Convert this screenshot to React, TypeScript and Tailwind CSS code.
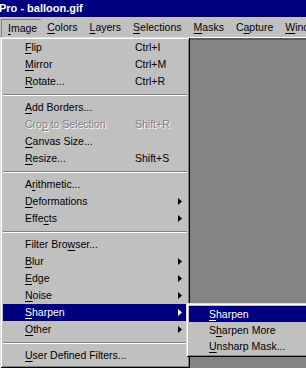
import React from "react";

type Entry =
  | { sep: true }
  | {
      sep?: false;
      a: string;
      k: string;
      b: string;
      sc?: string;
      arrow?: boolean;
      dis?: boolean;
      hl?: boolean;
    };

const items: Entry[] = [
  { a: "", k: "F", b: "lip", sc: "Ctrl+I" },
  { a: "", k: "M", b: "irror", sc: "Ctrl+M" },
  { a: "", k: "R", b: "otate...", sc: "Ctrl+R" },
  { sep: true },
  { a: "", k: "A", b: "dd Borders..." },
  { a: "Cro", k: "p", b: " to Selection", sc: "Shift+R", dis: true },
  { a: "", k: "C", b: "anvas Size..." },
  { a: "", k: "R", b: "esize...", sc: "Shift+S" },
  { sep: true },
  { a: "A", k: "r", b: "ithmetic..." },
  { a: "", k: "D", b: "eformations", arrow: true },
  { a: "Effe", k: "c", b: "ts", arrow: true },
  { sep: true },
  { a: "Filter Bro", k: "w", b: "ser..." },
  { a: "", k: "B", b: "lur", arrow: true },
  { a: "", k: "E", b: "dge", arrow: true },
  { a: "", k: "N", b: "oise", arrow: true },
  { a: "", k: "S", b: "harpen", arrow: true, hl: true },
  { a: "", k: "O", b: "ther", arrow: true },
  { sep: true },
  { a: "", k: "U", b: "ser Defined Filters..." },
];

const sub = [
  { a: "", k: "S", b: "harpen", hl: true },
  { a: "S", k: "h", b: "arpen More" },
  { a: "", k: "U", b: "nsharp Mask..." },
];

const menuBar = [
  { a: "", k: "I", b: "mage", active: true },
  { a: "", k: "C", b: "olors" },
  { a: "", k: "L", b: "ayers" },
  { a: "", k: "S", b: "elections" },
  { a: "", k: "M", b: "asks" },
  { a: "C", k: "a", b: "pture" },
  { a: "", k: "W", b: "indow" },
];

function Mn({ a, k, b }: { a: string; k: string; b: string }) {
  return (
    <span className="whitespace-pre">
      {a}
      <span className="underline decoration-1 underline-offset-[2px]">{k}</span>
      {b}
    </span>
  );
}

function Arrow() {
  return (
    <svg width="4" height="7" viewBox="0 0 4 7" className="block">
      <polygon points="0,0 4,3.5 0,7" fill="currentColor" />
    </svg>
  );
}

const winBorder =
  "shadow-[inset_1px_1px_0_#dfdfdf,inset_-1px_-1px_0_#000000,inset_2px_2px_0_#ffffff,inset_-2px_-2px_0_#808080]";

export default function App() {
  return (
    <div
      className="relative w-[306px] h-[368px] overflow-hidden bg-[#c0c0c0] flex flex-col text-[10.5px] leading-none text-black"
      style={{ fontFamily: '"Liberation Sans", Arial, sans-serif' }}
    >
      {/* Title bar */}
      <div className="h-[17px] bg-[#000080] flex items-center text-white font-bold text-[11px] pl-0">
        <span className="-ml-[1px] whitespace-pre">Pro - balloon.gif</span>
      </div>
      {/* Menu bar */}
      <div className="h-[20px] flex items-center pl-[1px] whitespace-pre">
        {menuBar.map((m, i) =>
          m.active ? (
            <div
              key={i}
              className="h-[18px] flex items-center pl-[6px] pr-[4px] border-t border-l border-[#808080] border-b-white border-r-white mt-[1px]"
            >
              <Mn a={m.a} k={m.k} b={m.b} />
            </div>
          ) : (
            <div key={i} className="h-[18px] flex items-center px-[6px]">
              <Mn a={m.a} k={m.k} b={m.b} />
            </div>
          )
        )}
      </div>
      <div className="h-[1px] bg-white" />
      {/* Workspace */}
      <div className="flex-1 bg-[#848484] border-t-2 border-[#5c5c5c]" />

      {/* Dropdown menu */}
      <div
        className={`absolute left-0 top-[37px] w-[190px] h-[331px] bg-[#c0c0c0] px-[3px] pt-[2px] ${winBorder}`}
      >
        {items.map((it, i) =>
          it.sep ? (
            <div key={i} className="h-[9px] flex flex-col justify-center">
              <div className="h-[1px] bg-[#808080]" />
              <div className="h-[1px] bg-white" />
            </div>
          ) : (
            <div
              key={i}
              className={`h-[17px] flex items-center pl-[22px] pr-[5px] ${
                it.hl ? "bg-[#000080] text-white" : ""
              } ${it.dis ? "text-[#808080] [text-shadow:1px_1px_0_#ffffff]" : ""}`}
            >
              <span className="w-[110px]">
                <Mn a={it.a} k={it.k} b={it.b} />
              </span>
              <span className="flex-1">{it.sc ?? ""}</span>
              {it.arrow ? <Arrow /> : null}
            </div>
          )
        )}
      </div>

      {/* Submenu */}
      <div
        className={`absolute left-[186px] top-[303px] w-[132px] h-[54px] bg-[#c0c0c0] px-[3px] pt-[3px] ${winBorder}`}
      >
        {sub.map((s, i) => (
          <div
            key={i}
            className={`h-[16px] flex items-center pl-[20px] ${
              s.hl ? "bg-[#000080] text-white" : ""
            }`}
          >
            <Mn a={s.a} k={s.k} b={s.b} />
          </div>
        ))}
      </div>
    </div>
  );
}
